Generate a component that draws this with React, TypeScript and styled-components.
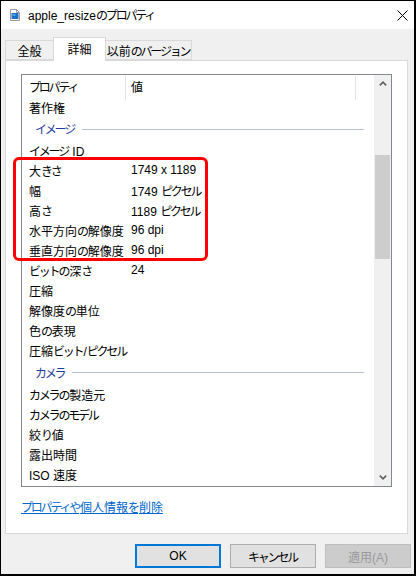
import React from 'react';
import styled, { createGlobalStyle } from 'styled-components';

const GlobalStyle = createGlobalStyle`
  html, body {
    margin: 0;
    padding: 0;
    background: #ffffff;
  }
  body {
    font-family: 'Liberation Sans', 'Noto Sans CJK JP', sans-serif;
    font-size: 12px;
    color: #000000;
  }
  * {
    box-sizing: border-box;
  }
`;

// kana in the UI font are proportional, so tighten them
const Kana = styled.span`
  letter-spacing: -2.2px;
  margin-right: 1px;
`;

const jp = (text: string) =>
  text.split(/([\u3040-\u30ff]+)/).map((part, i) =>
    i % 2 === 1 ? <Kana key={i}>{part}</Kana> : <React.Fragment key={i}>{part}</React.Fragment>
  );

type Item =
  | { kind: 'row'; name: string; value?: string }
  | { kind: 'group'; name: string };

const items: Item[] = [
  { kind: 'row', name: '著作権' },
  { kind: 'group', name: 'イメージ' },
  { kind: 'row', name: 'イメージ ID' },
  { kind: 'row', name: '大きさ', value: '1749 x 1189' },
  { kind: 'row', name: '幅', value: '1749 ピクセル' },
  { kind: 'row', name: '高さ', value: '1189 ピクセル' },
  { kind: 'row', name: '水平方向の解像度', value: '96 dpi' },
  { kind: 'row', name: '垂直方向の解像度', value: '96 dpi' },
  { kind: 'row', name: 'ビットの深さ', value: '24' },
  { kind: 'row', name: '圧縮' },
  { kind: 'row', name: '解像度の単位' },
  { kind: 'row', name: '色の表現' },
  { kind: 'row', name: '圧縮ビット/ピクセル' },
  { kind: 'group', name: 'カメラ' },
  { kind: 'row', name: 'カメラの製造元' },
  { kind: 'row', name: 'カメラのモデル' },
  { kind: 'row', name: '絞り値' },
  { kind: 'row', name: '露出時間' },
  { kind: 'row', name: 'ISO 速度' },
];

const Window = styled.div`
  position: relative;
  width: 416px;
  height: 576px;
  display: flex;
  flex-direction: column;
  border-style: solid;
  border-color: #000000;
  border-width: 1px 2px 2px 1px;
  background: #f0f0f0;
`;

const TitleBar = styled.div`
  height: 28px;
  flex: none;
  display: flex;
  align-items: center;
  background: #ffffff;
  padding-left: 9px;
  padding-right: 6px;
  > span {
    flex: 1;
    margin-left: 8px;
    font-size: 12px;
    line-height: 16px;
    margin-top: 1px;
  }
`;

const Body = styled.div`
  flex: 1;
  display: flex;
  flex-direction: column;
  padding: 8px 6px 0 4px;
`;

const Tabs = styled.div`
  display: flex;
  height: 23px;
  position: relative;
  z-index: 1;
`;

const Tab = styled.div<{ selected?: boolean; w: number }>`
  width: ${(p) => p.w}px;
  height: ${(p) => (p.selected ? 24 : 20)}px;
  margin-top: ${(p) => (p.selected ? 0 : 3)}px;
  margin-left: -1px;
  &:first-child {
    margin-left: 0;
  }
  display: flex;
  align-items: center;
  justify-content: center;
  white-space: nowrap;
  padding-bottom: ${(p) => (p.selected ? 3 : 0)}px;
  border: 1px solid #d9d9d9;
  border-bottom: ${(p) => (p.selected ? 'none' : '1px solid #d9d9d9')};
  background: ${(p) => (p.selected ? '#ffffff' : '#f0f0f0')};
  font-size: 12px;
  z-index: ${(p) => (p.selected ? 2 : 0)};
`;

const Panel = styled.div`
  height: 474px;
  flex: none;
  border: 1px solid #d9d9d9;
  background: #ffffff;
  padding: 13px 15px 0 15px;
  display: flex;
  flex-direction: column;
`;

const ListBox = styled.div`
  height: 413px;
  flex: none;
  border: 1px solid #828790;
  display: flex;
`;

const ListContent = styled.div`
  flex: 1;
  display: flex;
  flex-direction: column;
  overflow: hidden;
  font-size: 12px;
`;

const HeaderRow = styled.div`
  height: 22px;
  flex: none;
  display: flex;
`;

const HeaderCell = styled.div<{ w: number }>`
  width: ${(p) => p.w}px;
  padding-left: ${(p) => (p.w > 110 ? 5 : 7)}px;
  display: flex;
  align-items: center;
  border-right: 1px solid #e5e5e5;
  margin-top: 1px;
  margin-bottom: -3px;
  padding-bottom: 3px;
`;

const Row = styled.div`
  height: 20px;
  flex: none;
  display: flex;
  align-items: center;
  white-space: nowrap;
`;

const NameCell = styled.div`
  width: 104px;
  padding-left: 7px;
`;

const ValueCell = styled.div`
  padding-left: 5px;
`;

const GroupRow = styled.div<{ h: number }>`
  height: ${(p) => p.h}px;
  flex: none;
  display: flex;
  align-items: center;
  padding-left: 13px;
  padding-right: 10px;
  color: #1e3c9b;
  &::after {
    content: '';
    flex: 1;
    height: 1px;
    margin-left: 7px;
    margin-top: 1px;
    background: #b9c2d6;
  }
`;

const ScrollBar = styled.div`
  width: 17px;
  flex: none;
  display: flex;
  flex-direction: column;
  background: #f0f0f0;
`;

const ArrowButton = styled.div`
  height: 17px;
  flex: none;
  display: flex;
  align-items: center;
  justify-content: center;
`;

const Track = styled.div`
  flex: 1;
  display: flex;
  flex-direction: column;
  align-items: center;
`;

const Thumb = styled.div`
  width: 15px;
  height: 104px;
  margin-top: 63px;
  background: #cdcdcd;
`;

const Link = styled.a`
  margin-top: 13px;
  color: #0066cc;
  text-decoration: underline;
  font-size: 12px;
  line-height: 16px;
  align-self: flex-start;
`;

const Footer = styled.div`
  display: flex;
  justify-content: flex-end;
  gap: 9px;
  padding: 10px 3px 0 0;
  margin-right: -6px;
`;

const Button = styled.div<{ variant?: 'default' | 'disabled' }>`
  width: 86px;
  height: 24px;
  display: flex;
  align-items: center;
  justify-content: center;
  font-size: 12px;
  background: ${(p) => (p.variant === 'disabled' ? '#cccccc' : '#e1e1e1')};
  color: ${(p) => (p.variant === 'disabled' ? '#9a9a9a' : '#000000')};
  border: ${(p) =>
    p.variant === 'default'
      ? '2px solid #0078d7'
      : p.variant === 'disabled'
      ? '1px solid #bfbfbf'
      : '1px solid #adadad'};
`;

const Highlight = styled.div`
  position: absolute;
  left: 12px;
  top: 156px;
  width: 195px;
  height: 104px;
  border: 3px solid #ff0000;
  border-radius: 6px;
  pointer-events: none;
`;

const FileIcon = () => (
  <svg width="10" height="12" viewBox="0 0 10 12">
    <path d="M0.5 0.5 H6.5 L9.5 3.5 V11.5 H0.5 Z" fill="#ffffff" stroke="#9a9a9a" />
    <path d="M6.5 0.5 V3.5 H9.5" fill="none" stroke="#9a9a9a" />
    <rect x="1.5" y="4" width="7" height="6" fill="#1d6fc4" />
    <rect x="2.5" y="5" width="3" height="2" fill="#4aa3e8" />
  </svg>
);

const CloseIcon = () => (
  <svg width="11" height="11" viewBox="0 0 11 11">
    <path d="M0.5 0.5 L10.5 10.5 M10.5 0.5 L0.5 10.5" stroke="#000" strokeWidth="1" />
  </svg>
);

const Chevron = ({ down }: { down?: boolean }) => (
  <svg width="8" height="5" viewBox="0 0 8 5" style={{ transform: down ? 'scaleY(-1)' : undefined }}>
    <path d="M0.8 4.4 L4 1.2 L7.2 4.4" fill="none" stroke="#606060" strokeWidth="1.6" />
  </svg>
);

const App: React.FC = () => {
  return (
    <>
      <GlobalStyle />
      <Window>
        <TitleBar>
          <FileIcon />
          <span>{jp('apple_resizeのプロパティ')}</span>
          <CloseIcon />
        </TitleBar>
        <Body>
          <Tabs>
            <Tab w={49}>全般</Tab>
            <Tab w={53} selected>
              詳細
            </Tab>
            <Tab w={87}>{jp('以前のバージョン')}</Tab>
          </Tabs>
          <Panel>
            <ListBox>
              <ListContent>
                <HeaderRow>
                  <HeaderCell w={104}>{jp('プロパティ')}</HeaderCell>
                  <HeaderCell w={230}>値</HeaderCell>
                </HeaderRow>
                {items.map((item, i) =>
                  item.kind === 'group' ? (
                    <GroupRow key={i} h={i < 5 ? 23 : 24}>
                      <span>{jp(item.name)}</span>
                    </GroupRow>
                  ) : (
                    <Row key={i}>
                      <NameCell>{jp(item.name)}</NameCell>
                      {item.value && <ValueCell>{jp(item.value)}</ValueCell>}
                    </Row>
                  )
                )}
              </ListContent>
              <ScrollBar>
                <ArrowButton>
                  <Chevron />
                </ArrowButton>
                <Track>
                  <Thumb />
                </Track>
                <ArrowButton>
                  <Chevron down />
                </ArrowButton>
              </ScrollBar>
            </ListBox>
            <Link>{jp('プロパティや個人情報を削除')}</Link>
          </Panel>
          <Footer>
            <Button variant="default">OK</Button>
            <Button>{jp('キャンセル')}</Button>
            <Button variant="disabled">適用(A)</Button>
          </Footer>
        </Body>
        <Highlight />
      </Window>
    </>
  );
};

export default App;
